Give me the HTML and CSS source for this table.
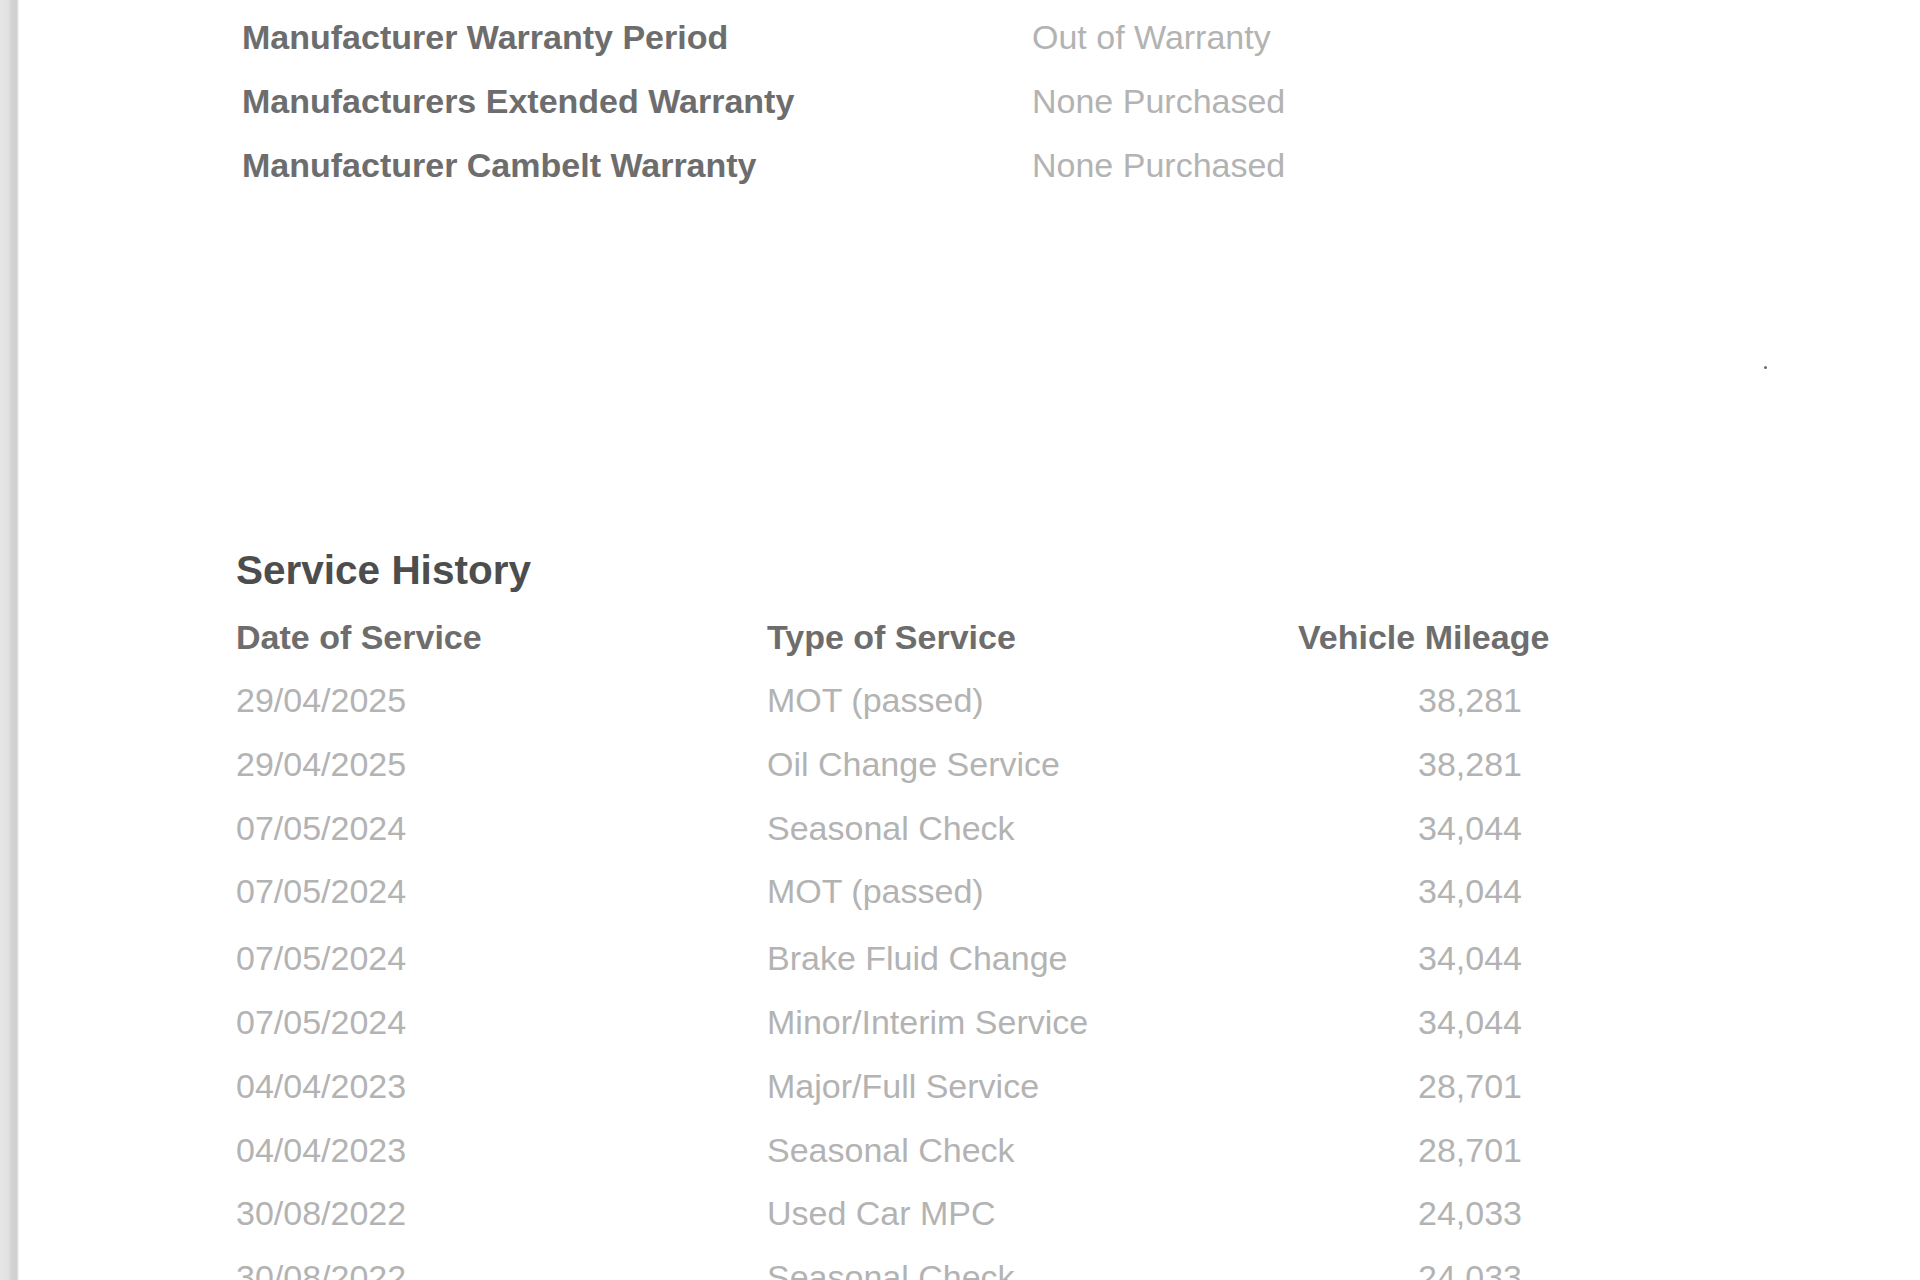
FILE: index.html
```html
<!DOCTYPE html>
<html lang="en">
<head>
<meta charset="utf-8">
<title>Vehicle Report</title>
<link rel="stylesheet" href="styles.css">
</head>
<body>
<div class="page">
  <div class="edge"></div>
  <main class="sheet">
    <span class="speck"></span>
    <section class="warranty">
      <div class="w-row"><span class="w-label">Manufacturer Warranty Period</span><span class="w-value">Out of Warranty</span></div>
      <div class="w-row"><span class="w-label">Manufacturers Extended Warranty</span><span class="w-value">None Purchased</span></div>
      <div class="w-row"><span class="w-label">Manufacturer Cambelt Warranty</span><span class="w-value">None Purchased</span></div>
    </section>

    <section class="service">
      <h2 class="s-title">Service History</h2>
      <div class="s-table">
        <div class="s-row s-head"><span>Date of Service</span><span>Type of Service</span><span class="mil">Vehicle Mileage</span></div>
        <div class="s-row"><span>29/04/2025</span><span>MOT (passed)</span><span class="num">38,281</span></div>
        <div class="s-row"><span>29/04/2025</span><span>Oil Change Service</span><span class="num">38,281</span></div>
        <div class="s-row"><span>07/05/2024</span><span>Seasonal Check</span><span class="num">34,044</span></div>
        <div class="s-row"><span>07/05/2024</span><span>MOT (passed)</span><span class="num">34,044</span></div>
        <div class="s-row s-gap"><span>07/05/2024</span><span>Brake Fluid Change</span><span class="num">34,044</span></div>
        <div class="s-row"><span>07/05/2024</span><span>Minor/Interim Service</span><span class="num">34,044</span></div>
        <div class="s-row"><span>04/04/2023</span><span>Major/Full Service</span><span class="num">28,701</span></div>
        <div class="s-row"><span>04/04/2023</span><span>Seasonal Check</span><span class="num">28,701</span></div>
        <div class="s-row"><span>30/08/2022</span><span>Used Car MPC</span><span class="num">24,033</span></div>
        <div class="s-row"><span>30/08/2022</span><span>Seasonal Check</span><span class="num">24,033</span></div>
      </div>
    </section>
  </main>
</div>
</body>
</html>
```

FILE: styles.css
```css
html, body {
  margin: 0;
  padding: 0;
  height: 1280px;
  overflow: hidden;
  background: #ffffff;
}

body {
  font-family: "Liberation Sans", Arial, sans-serif;
}

.page {
  display: flex;
  height: 1280px;
}

.edge {
  width: 19px;
  flex: 0 0 19px;
  background: linear-gradient(to right, #e6e6e6 0, #e2e2e2 8px, #d3d3d3 12px, #d0d0d0 17px, #ececec 18px, #f6f6f6 19px);
}

.sheet {
  position: relative;
  flex: 1;
  background: #ffffff;
}

.speck {
  position: absolute;
  left: 1745px;
  top: 366px;
  width: 3px;
  height: 3px;
  border-radius: 50%;
  background: #6a6a6a;
}

.warranty {
  padding: 5px 0 0 223px;
}

.w-row {
  display: grid;
  grid-template-columns: 790px auto;
  height: 64px;
  line-height: 64px;
  font-size: 34px;
}

.w-label {
  font-weight: bold;
  color: #6d6d6d;
}

.w-value {
  color: #b3b3b3;
}

.service {
  padding: 348px 0 0 217px;
}

.s-title {
  margin: 0;
  font-size: 40.5px;
  line-height: 50px;
  font-weight: bold;
  color: #4d4d4d;
}

.s-table {
  margin-top: 10.5px;
}

.s-row {
  display: grid;
  grid-template-columns: 531px 531px 251px;
  height: 63.7px;
  line-height: 63.7px;
  font-size: 34px;
  color: #b3b3b3;
}

.s-gap {
  margin-top: 3.5px;
}

.s-head {
  font-weight: bold;
  color: #6d6d6d;
}

.num {
  text-align: right;
  padding-right: 27px;
}

.mil {
  white-space: nowrap;
}
```
